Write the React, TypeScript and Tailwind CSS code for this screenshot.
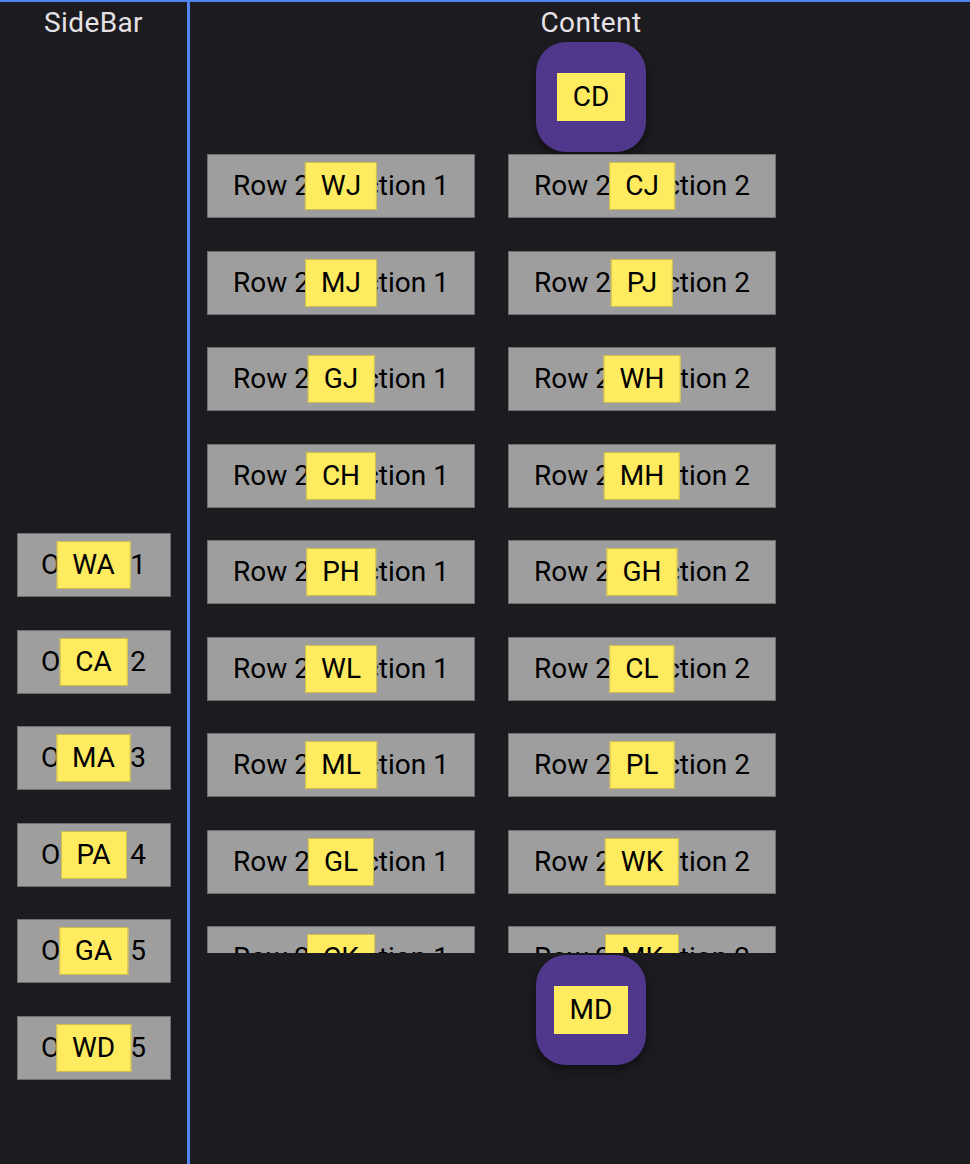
import React from 'react';

const sideItems = [
  { label: 'WA', text: 'Option 1' },
  { label: 'CA', text: 'Option 2' },
  { label: 'MA', text: 'Option 3' },
  { label: 'PA', text: 'Option 4' },
  { label: 'GA', text: 'Option 5' },
  { label: 'WD', text: 'Option 5' },
];

const rows = [
  ['WJ', 'CJ'],
  ['MJ', 'PJ'],
  ['GJ', 'WH'],
  ['CH', 'MH'],
  ['PH', 'GH'],
  ['WL', 'CL'],
  ['ML', 'PL'],
  ['GL', 'WK'],
  ['CK', 'MK'],
];

const Tag = ({ text }: { text: string }) => (
  <div className="absolute left-1/2 top-1/2 -translate-x-1/2 -translate-y-1/2 h-[48px] px-[15px] flex items-center justify-center bg-[#ffeb60] text-black text-[28px] border border-[#cdbd4e]">
    {text}
  </div>
);

const Item = ({ text, tag, width }: { text: string; tag: string; width: string }) => (
  <div
    className={`relative ${width} h-[64px] shrink-0 bg-[#9e9e9e] border border-[#6f6f6f] flex items-center justify-center text-[28px] text-black whitespace-nowrap`}
  >
    <span>{text}</span>
    <Tag text={tag} />
  </div>
);

const Fab = ({ text }: { text: string }) => (
  <div className="w-[110px] h-[110px] rounded-[30px] bg-[#4f378b] shadow-[0_4px_10px_rgba(0,0,0,0.45)] flex items-center justify-center">
    <div className="h-[48px] px-[16px] flex items-center bg-[#ffeb60] text-black text-[28px]">{text}</div>
  </div>
);

export default function App() {
  return (
    <div
      className="w-[970px] h-[1164px] overflow-hidden bg-[#1c1b1f] border-t-2 border-[#4f83f0] flex"
      style={{ fontFamily: 'Roboto, "Noto Sans", sans-serif' }}
    >
      <aside className="w-[190px] shrink-0 border-r-[3px] border-[#4f83f0] flex flex-col items-center">
        <div className="h-[41px] pt-px flex items-center text-[28px] text-[#e6e1e5] tracking-[0.4px]">SideBar</div>
        <div className="mt-[490px] flex flex-col gap-[32.5px]">
          {sideItems.map((s, i) => (
            <Item key={i} text={s.text} tag={s.label} width="w-[154px]" />
          ))}
        </div>
      </aside>

      <main className="w-[802px] shrink-0 flex flex-col items-center">
        <div className="h-[40px] pt-px flex items-center text-[28px] text-[#e6e1e5] tracking-[0.4px]">Content</div>
        <Fab text="CD" />
        <div className="self-stretch h-[800px] mt-px overflow-hidden pl-[17px] pt-px">
          <div className="flex flex-col gap-[32.5px]">
            {rows.map((r, i) => (
              <div key={i} className="flex gap-[33px]">
                <Item text={`Row 2${i} Section 1`} tag={r[0]} width="w-[268px]" />
                <Item text={`Row 2${i} Section 2`} tag={r[1]} width="w-[268px]" />
              </div>
            ))}
          </div>
        </div>
        <div className="mt-[2px]">
          <Fab text="MD" />
        </div>
      </main>
    </div>
  );
}
